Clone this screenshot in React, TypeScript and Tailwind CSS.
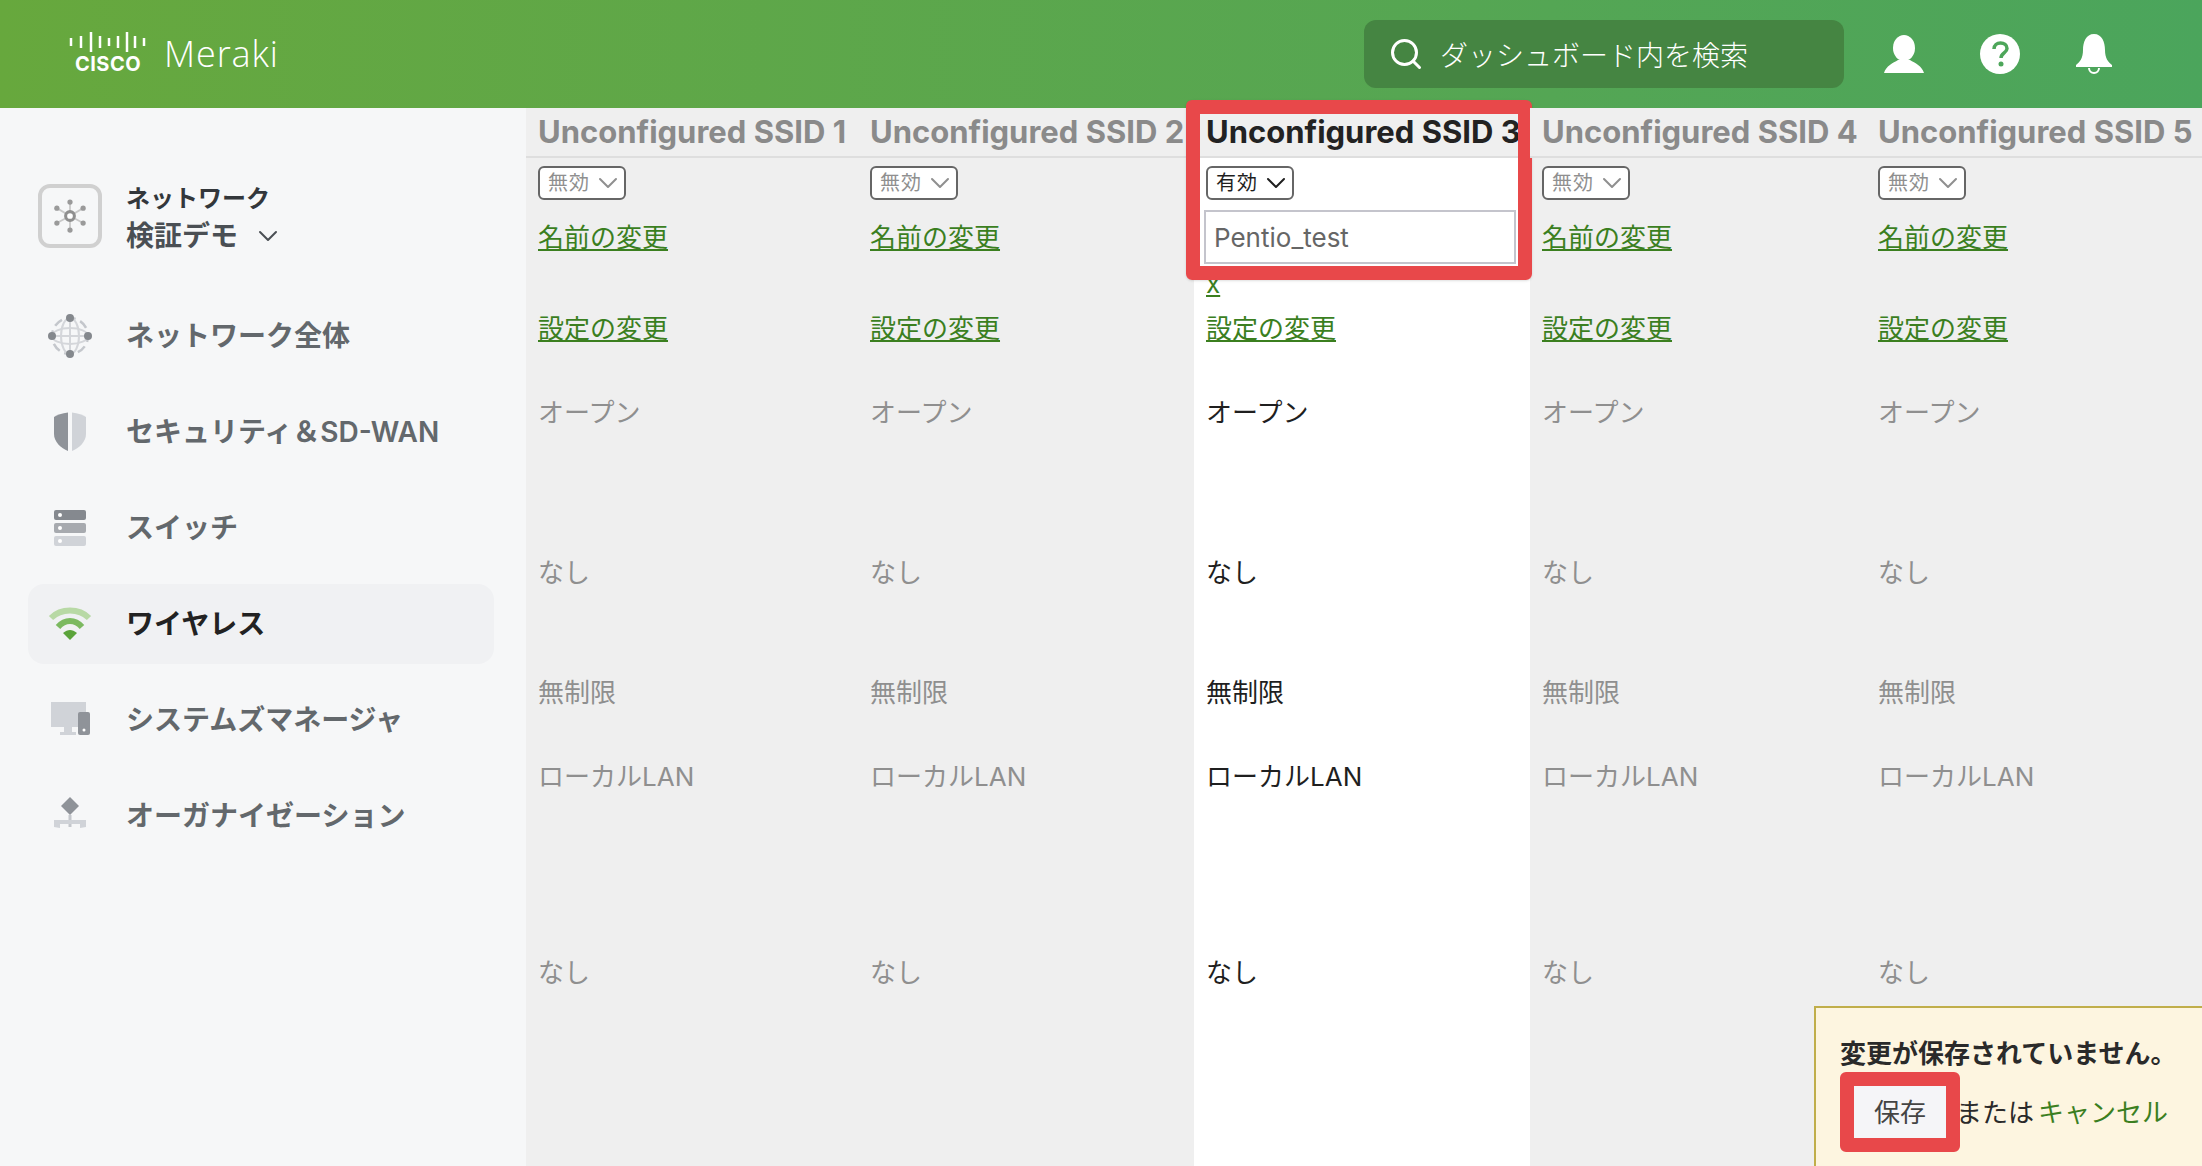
import { ChevronDown, Search } from 'lucide-react';
import React from 'react';

const RED = 'border-[#e8484a]';

function CiscoLogo() {
  const bars = [
    [2, 8],
    [12, 12],
    [22, 20],
    [31, 12],
    [40, 8],
    [49, 12],
    [58, 20],
    [66, 12],
    [75, 8],
  ];
  return (
    <div className="flex w-20 flex-col items-center">
      <svg width="78" height="20" viewBox="0 0 78 20" stroke="white" strokeWidth="2.5">
        {bars.map(([x, h]) => (
          <line key={x} x1={x} x2={x} y1={10 - h / 2} y2={10 + h / 2} />
        ))}
      </svg>
      <span className="text-xl leading-6 font-bold tracking-wide text-white">CISCO</span>
    </div>
  );
}

function UserIcon() {
  return (
    <svg width="40" height="38" viewBox="0 0 40 38" fill="white">
      <ellipse cx="20" cy="13" rx="11" ry="13" />
      <path d="M0 38C2 31 9 28 14 25H26C31 28 38 31 40 38Z" />
    </svg>
  );
}

function HelpIcon() {
  return (
    <svg width="40" height="40" viewBox="0 0 40 40">
      <circle cx="20" cy="20" r="20" fill="white" />
      <path d="M14 15C14 11 17 9 20.500 9C24 9 27 11 27 14.500C27 19 21 19 21 24" fill="none" stroke="#4da65a" strokeWidth="3.500" />
      <circle cx="21" cy="30" r="2.500" fill="#4da65a" />
    </svg>
  );
}

function BellIcon() {
  return (
    <svg width="36" height="40" viewBox="0 0 36 40" fill="white">
      <path d="M18 0C10 0 7 8 7 16C7 24 4 28 0 31V33H36V31C32 28 29 24 29 16C29 8 26 0 18 0Z" />
      <path d="M13 34A5 5 0 0 0 23 34" fill="none" stroke="white" strokeWidth="2" />
    </svg>
  );
}

function HubIcon() {
  const nodes = [
    [32, 16],
    [47, 23],
    [47, 40],
    [32, 48],
    [17, 40],
    [17, 23],
  ];
  return (
    <svg width="60" height="60" viewBox="0 0 64 64">
      {nodes.map(([x, y]) => (
        <g key={`${x}-${y}`}>
          <line x1="32" y1="32" x2={x} y2={y} stroke="#c8c8c8" strokeWidth="2" />
          <circle cx={x} cy={y} r="3" fill="#9a9a9a" />
        </g>
      ))}
      <circle cx="32" cy="32" r="5" fill="white" stroke="#8f8f8f" strokeWidth="3.500" />
    </svg>
  );
}

function GlobeIcon() {
  return (
    <svg className="size-11" viewBox="0 0 44 44" fill="none">
      <circle cx="22" cy="22" r="18" stroke="#c4c7cc" strokeWidth="2.500" strokeDasharray="9 5" strokeDashoffset="3" />
      <ellipse cx="22" cy="22" rx="9" ry="18" stroke="#d4d6da" strokeWidth="2" />
      <ellipse cx="22" cy="22" rx="18" ry="8" stroke="#d4d6da" strokeWidth="2" />
      <line x1="22" y1="4" x2="22" y2="40" stroke="#d4d6da" strokeWidth="2" />
      <line x1="4" y1="22" x2="40" y2="22" stroke="#d4d6da" strokeWidth="2" />
      <circle cx="22" cy="4" r="4" fill="#84888d" />
      <circle cx="22" cy="40" r="4" fill="#84888d" />
      <circle cx="4" cy="22" r="4" fill="#84888d" />
      <circle cx="40" cy="22" r="4" fill="#84888d" />
    </svg>
  );
}

function ShieldIcon() {
  return (
    <svg className="size-11" viewBox="0 0 44 44">
      <path d="M20 2.500C14 3 9 5 6 7V24C6 32 13 38 20 41Z" fill="#8f9399" />
      <path d="M24 2.500C30 3 35 5 38 7V24C38 32 31 38 24 41Z" fill="#d0d3d8" />
    </svg>
  );
}

function SwitchIcon() {
  return (
    <svg className="size-11" viewBox="0 0 44 44" fill="white">
      <rect x="6" y="4" width="32" height="10" rx="2" fill="#85898f" />
      <rect x="6" y="17" width="32" height="10" rx="2" fill="#a7aaaf" />
      <rect x="6" y="30" width="32" height="10" rx="2" fill="#d0d3d8" />
      <circle cx="12" cy="9" r="2" />
      <circle cx="12" cy="22" r="2" />
      <circle cx="12" cy="35" r="2" />
    </svg>
  );
}

function WifiIcon() {
  return (
    <svg className="size-11" viewBox="0 0 44 44" fill="none">
      <path d="M3 16C13 6 31 6 41 16" stroke="#b8d9a5" strokeWidth="6" />
      <path d="M10 25C17 17 27 17 34 25" stroke="#7cb960" strokeWidth="6" />
      <path d="M15 31C20 27 24 27 29 31L22 38Z" fill="#5ba33a" />
    </svg>
  );
}

function DevicesIcon() {
  return (
    <svg className="size-11" viewBox="0 0 44 44">
      <rect x="3" y="4" width="35" height="25" fill="#d0d3d8" />
      <rect x="16" y="29" width="8" height="5" fill="#d0d3d8" />
      <rect x="12" y="34" width="16" height="3" fill="#d0d3d8" />
      <rect x="30" y="14" width="12" height="23" rx="2" fill="#8f9399" />
      <circle cx="36" cy="32" r="1.500" fill="white" />
    </svg>
  );
}

function OrgIcon() {
  return (
    <svg className="size-11" viewBox="0 0 44 44">
      <path d="M22 3L31 12L22 21L13 12Z" fill="#8f9399" />
      <rect x="20.500" y="21" width="3" height="12" fill="#c4c7cc" />
      <rect x="6" y="26" width="32" height="4" fill="#d0d3d8" />
      <path d="M6 30H12V34L6 33ZM32 30H38V33L32 34Z" fill="#d0d3d8" />
    </svg>
  );
}

const navItems = [
  { label: 'ネットワーク全体', icon: <GlobeIcon /> },
  { label: 'セキュリティ＆SD-WAN', icon: <ShieldIcon /> },
  { label: 'スイッチ', icon: <SwitchIcon /> },
  { label: 'ワイヤレス', icon: <WifiIcon />, active: true },
  { label: 'システムズマネージャ', icon: <DevicesIcon /> },
  { label: 'オーガナイゼーション', icon: <OrgIcon /> },
];

function Sidebar() {
  return (
    <aside className="w-[526px] shrink-0 bg-[#f6f7f8] pt-18 text-[28px]">
      <div className="flex h-18 items-center gap-6 pl-9.5">
        <div className="flex size-16 shrink-0 items-center justify-center rounded-xl border-4 border-[#d0d0d0]">
          <HubIcon />
        </div>
        <div className="mt-1 flex flex-col text-[#33373b]">
          <span className="text-2xl leading-9 font-semibold">ネットワーク</span>
          <span className="flex items-center gap-3.5 leading-9.5 font-semibold text-[#4a4f54]">
            検証デモ
            <ChevronDown className="size-8" strokeWidth={1.5} />
          </span>
        </div>
      </div>

      <nav className="mt-11 flex flex-col gap-4 pr-8 pl-7">
        {navItems.map((item) => (
          <div
            key={item.label}
            className={`flex h-20 items-center gap-8.5 rounded-2xl pl-5 font-semibold ${
              item.active ? 'bg-[#f0f1f3] text-[#222222]' : 'text-[#63686c]'
            }`}
          >
            {item.icon}
            <span>{item.label}</span>
          </div>
        ))}
      </nav>
    </aside>
  );
}

function SsidColumn({ index }: { index: number }) {
  const active = index === 3;

  return (
    <div
      className={`relative flex flex-col ${index === 1 ? 'flex-1' : 'w-84'} ${
        active ? 'bg-white text-[#1f1f1f]' : 'text-[#8f8f8f]'
      }`}
    >
      <div
        className={`flex h-12.5 items-center border-b-2 border-[#dedede] bg-[#efefef] pl-3 text-[31px] font-bold whitespace-nowrap ${
          active ? 'text-[#222222]' : 'text-[#8a8a8a]'
        }`}
      >
        Unconfigured SSID {index}
      </div>

      <div className="flex flex-col pr-3 pl-3">
        <div className="mt-2 flex h-8.5 w-22 items-center rounded-md border-2 border-[#666666] bg-white pl-2 text-xl tracking-wider">
          {active ? '有効' : '無効'}
          <ChevronDown className="ml-0.5 size-8 shrink-0" strokeWidth={1.5} />
        </div>

        {active ? (
          <div className="h-28 pt-2.5">
            <input
              readOnly
              value="Pentio_test"
              className="-ml-0.5 h-13.5 w-full border-2 border-[#c4c4cc] px-2 text-[#666666]"
            />
            <a className="mt-1 block leading-8 text-[#3b7f1f] underline">x</a>
          </div>
        ) : (
          <div className="h-28 pt-4.5">
            <a className="leading-9 text-[#3b7f1f] underline">名前の変更</a>
          </div>
        )}

        <a className="flex h-8 items-center text-[#3b7f1f] underline">設定の変更</a>
        <div className="mt-12 flex h-10 items-center">オープン</div>
        <div className="mt-30 flex h-10 items-center">なし</div>
        <div className="mt-20 flex h-10 items-center">無制限</div>
        <div className="mt-11 flex h-10 items-center">ローカルLAN</div>
        <div className="mt-40 flex h-8 items-center">なし</div>
      </div>

      {active && (
        <div className={`absolute -top-2 -right-0.5 -left-2 h-45 rounded-md border-14 ${RED} shadow-sm`} />
      )}
    </div>
  );
}

export default function App() {
  return (
    <div className="flex h-screen w-full flex-col overflow-hidden font-['Inter','Noto_Sans_CJK_JP',sans-serif] text-[26px]">
      <header className="flex h-27 shrink-0 items-center bg-linear-to-r from-[#67a83d] to-[#4ba55c] pr-22.5 pl-17">
        <CiscoLogo />
        <span className="ml-4 font-['Open_Sans',sans-serif] text-4xl font-light tracking-wide text-white">Meraki</span>

        <div className="ml-auto flex h-17 w-120 items-center gap-4 rounded-xl bg-[#458542] pl-6 text-[28px] text-white">
          <Search className="size-9" />
          <span className="font-['Noto_Sans_CJK_JP',sans-serif] font-light">ダッシュボード内を検索</span>
        </div>
        <div className="ml-10 flex items-center gap-14">
          <UserIcon />
          <HelpIcon />
          <BellIcon />
        </div>
      </header>

      <div className="relative flex flex-1">
        <Sidebar />
        <main className="flex flex-1 bg-[#efefef]">
          {[1, 2, 3, 4, 5].map((n) => (
            <SsidColumn key={n} index={n} />
          ))}
        </main>

        <div className="absolute right-0 bottom-0 h-40 w-97 border-t-2 border-l-2 border-[#c0ae4a] bg-[#fdf5e0] pt-7 pl-6 text-[#2a2a2a]">
          <p className="leading-9 font-semibold">変更が保存されていません。</p>
          <div className="flex items-center">
            <button className={`h-20 w-30 border-14 ${RED} rounded-md bg-[#f5f5f8] text-[#444444]`}>保存</button>
            <span className="-ml-1">または</span>
            <a className="ml-1 text-[#3b7f1f]">キャンセル</a>
          </div>
        </div>
      </div>
    </div>
  );
}
